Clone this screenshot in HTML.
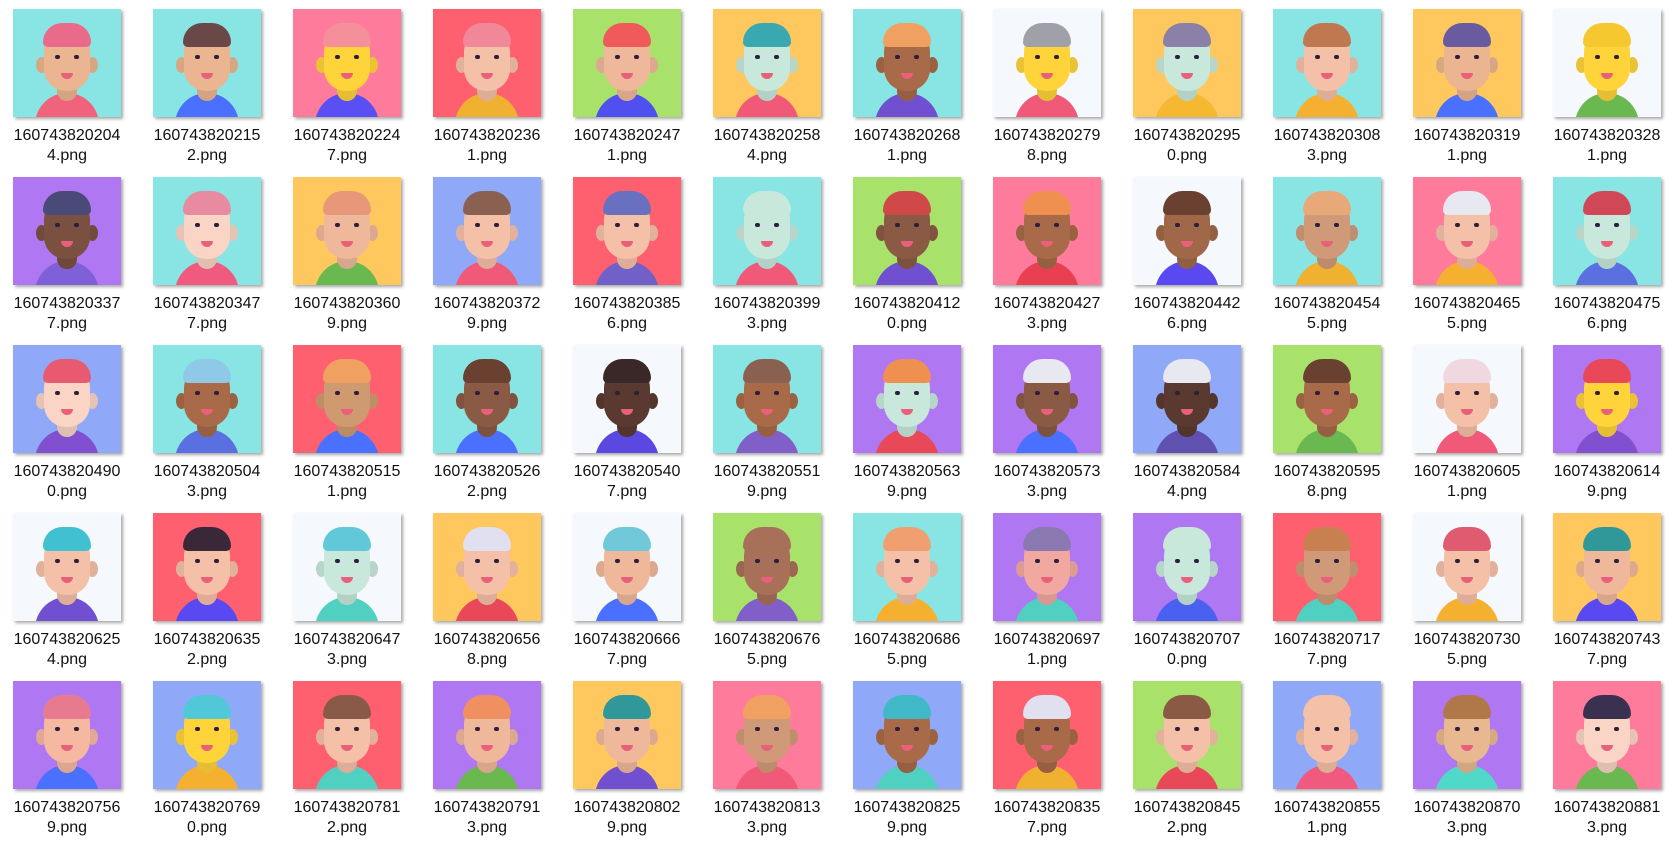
<!DOCTYPE html>
<html><head><meta charset="utf-8"><style>
html,body{margin:0;padding:0;background:#fff;width:1674px;height:847px;overflow:hidden;position:relative}
.c{position:absolute;width:108px;height:108px;overflow:hidden;background:var(--b);box-shadow:2px 2px 3px rgba(0,0,0,.35)}
.c i{position:absolute;display:block}
.t{left:22px;top:84px;width:64px;height:40px;background:var(--t);border-radius:32px 32px 0 0}
.n{left:44px;top:66px;width:20px;height:26px;background:var(--s);border-radius:0 0 10px 10px;filter:brightness(.9)}
.e1,.e2{top:48px;width:11px;height:16px;background:var(--s);border-radius:50%;filter:brightness(.92)}
.e1{left:23px}.e2{left:74px}
.f{left:31px;top:20px;width:46px;height:62px;background:var(--s);border-radius:23px 23px 22px 22px}
.h{left:30px;top:14px;width:48px;height:24px;background:var(--h);border-radius:24px 24px 6px 6px}
.y1,.y2{top:46px;width:5px;height:4px;background:#2a1f3d;border-radius:2px}
.y1{left:42px}.y2{left:61px}
.m{left:48px;top:64px;width:12px;height:6px;background:#e8607a;border-radius:0 0 6px 6px}
.l{position:absolute;width:140px;text-align:center;font:16px/20px "Liberation Sans","Noto Sans CJK SC",sans-serif;color:#111}
</style></head><body>
<!-- row 1 -->
<div class="c" style="left:13px;top:9px;--b:#88e5e3;--s:#eab590;--h:#e96a8a;--t:#f1637d"><i class="t"></i><i class="n"></i><i class="e1"></i><i class="e2"></i><i class="f"></i><i class="h"></i><i class="y1"></i><i class="y2"></i><i class="m"></i></div>
<div class="l" style="left:-3px;top:126px">160743820204<br>4.png</div>
<div class="c" style="left:153px;top:9px;--b:#88e5e3;--s:#eab590;--h:#6b4848;--t:#4a70ff"><i class="t"></i><i class="n"></i><i class="e1"></i><i class="e2"></i><i class="f"></i><i class="h"></i><i class="y1"></i><i class="y2"></i><i class="m"></i></div>
<div class="l" style="left:137px;top:126px">160743820215<br>2.png</div>
<div class="c" style="left:293px;top:9px;--b:#ff7b9c;--s:#ffd33a;--h:#f5909a;--t:#5a4ff5"><i class="t"></i><i class="n"></i><i class="e1"></i><i class="e2"></i><i class="f"></i><i class="h"></i><i class="y1"></i><i class="y2"></i><i class="m"></i></div>
<div class="l" style="left:277px;top:126px">160743820224<br>7.png</div>
<div class="c" style="left:433px;top:9px;--b:#ff6070;--s:#f5c0a8;--h:#f0889a;--t:#f0b030"><i class="t"></i><i class="n"></i><i class="e1"></i><i class="e2"></i><i class="f"></i><i class="h"></i><i class="y1"></i><i class="y2"></i><i class="m"></i></div>
<div class="l" style="left:417px;top:126px">160743820236<br>1.png</div>
<div class="c" style="left:573px;top:9px;--b:#a8e26b;--s:#f0b89a;--h:#f05a5a;--t:#5050f0"><i class="t"></i><i class="n"></i><i class="e1"></i><i class="e2"></i><i class="f"></i><i class="h"></i><i class="y1"></i><i class="y2"></i><i class="m"></i></div>
<div class="l" style="left:557px;top:126px">160743820247<br>1.png</div>
<div class="c" style="left:713px;top:9px;--b:#ffc85e;--s:#c8e8dc;--h:#3aa8b0;--t:#f05a78"><i class="t"></i><i class="n"></i><i class="e1"></i><i class="e2"></i><i class="f"></i><i class="h"></i><i class="y1"></i><i class="y2"></i><i class="m"></i></div>
<div class="l" style="left:697px;top:126px">160743820258<br>4.png</div>
<div class="c" style="left:853px;top:9px;--b:#88e5e3;--s:#a86a48;--h:#f0a060;--t:#7050d0"><i class="t"></i><i class="n"></i><i class="e1"></i><i class="e2"></i><i class="f"></i><i class="h"></i><i class="y1"></i><i class="y2"></i><i class="m"></i></div>
<div class="l" style="left:837px;top:126px">160743820268<br>1.png</div>
<div class="c" style="left:993px;top:9px;--b:#f5f8fc;--s:#ffd33a;--h:#a0a0a8;--t:#f05a78"><i class="t"></i><i class="n"></i><i class="e1"></i><i class="e2"></i><i class="f"></i><i class="h"></i><i class="y1"></i><i class="y2"></i><i class="m"></i></div>
<div class="l" style="left:977px;top:126px">160743820279<br>8.png</div>
<div class="c" style="left:1133px;top:9px;--b:#ffc85e;--s:#c8e8dc;--h:#8a80a8;--t:#f5b830"><i class="t"></i><i class="n"></i><i class="e1"></i><i class="e2"></i><i class="f"></i><i class="h"></i><i class="y1"></i><i class="y2"></i><i class="m"></i></div>
<div class="l" style="left:1117px;top:126px">160743820295<br>0.png</div>
<div class="c" style="left:1273px;top:9px;--b:#88e5e3;--s:#f5c0a8;--h:#c07850;--t:#f5b030"><i class="t"></i><i class="n"></i><i class="e1"></i><i class="e2"></i><i class="f"></i><i class="h"></i><i class="y1"></i><i class="y2"></i><i class="m"></i></div>
<div class="l" style="left:1257px;top:126px">160743820308<br>3.png</div>
<div class="c" style="left:1413px;top:9px;--b:#ffc85e;--s:#eab590;--h:#6a5aa0;--t:#4a70ff"><i class="t"></i><i class="n"></i><i class="e1"></i><i class="e2"></i><i class="f"></i><i class="h"></i><i class="y1"></i><i class="y2"></i><i class="m"></i></div>
<div class="l" style="left:1397px;top:126px">160743820319<br>1.png</div>
<div class="c" style="left:1553px;top:9px;--b:#f5f8fc;--s:#ffd33a;--h:#f5c830;--t:#6ab850"><i class="t"></i><i class="n"></i><i class="e1"></i><i class="e2"></i><i class="f"></i><i class="h"></i><i class="y1"></i><i class="y2"></i><i class="m"></i></div>
<div class="l" style="left:1537px;top:126px">160743820328<br>1.png</div>
<!-- row 2 -->
<div class="c" style="left:13px;top:177px;--b:#b077f2;--s:#7a5040;--h:#4a4a78;--t:#8060d8"><i class="t"></i><i class="n"></i><i class="e1"></i><i class="e2"></i><i class="f"></i><i class="h"></i><i class="y1"></i><i class="y2"></i><i class="m"></i></div>
<div class="l" style="left:-3px;top:294px">160743820337<br>7.png</div>
<div class="c" style="left:153px;top:177px;--b:#88e5e3;--s:#fad4c4;--h:#e88aa0;--t:#f05a7e"><i class="t"></i><i class="n"></i><i class="e1"></i><i class="e2"></i><i class="f"></i><i class="h"></i><i class="y1"></i><i class="y2"></i><i class="m"></i></div>
<div class="l" style="left:137px;top:294px">160743820347<br>7.png</div>
<div class="c" style="left:293px;top:177px;--b:#ffc85e;--s:#f0b89a;--h:#e89878;--t:#6ab850"><i class="t"></i><i class="n"></i><i class="e1"></i><i class="e2"></i><i class="f"></i><i class="h"></i><i class="y1"></i><i class="y2"></i><i class="m"></i></div>
<div class="l" style="left:277px;top:294px">160743820360<br>9.png</div>
<div class="c" style="left:433px;top:177px;--b:#8fa8f8;--s:#f5c0a8;--h:#8a6050;--t:#f05a78"><i class="t"></i><i class="n"></i><i class="e1"></i><i class="e2"></i><i class="f"></i><i class="h"></i><i class="y1"></i><i class="y2"></i><i class="m"></i></div>
<div class="l" style="left:417px;top:294px">160743820372<br>9.png</div>
<div class="c" style="left:573px;top:177px;--b:#ff6070;--s:#f5c0a8;--h:#6a70c0;--t:#7060c8"><i class="t"></i><i class="n"></i><i class="e1"></i><i class="e2"></i><i class="f"></i><i class="h"></i><i class="y1"></i><i class="y2"></i><i class="m"></i></div>
<div class="l" style="left:557px;top:294px">160743820385<br>6.png</div>
<div class="c" style="left:713px;top:177px;--b:#88e5e3;--s:#c8e8dc;--h:#c8e8dc;--t:#f05a78"><i class="t"></i><i class="n"></i><i class="e1"></i><i class="e2"></i><i class="f"></i><i class="h"></i><i class="y1"></i><i class="y2"></i><i class="m"></i></div>
<div class="l" style="left:697px;top:294px">160743820399<br>3.png</div>
<div class="c" style="left:853px;top:177px;--b:#a8e26b;--s:#8a5a44;--h:#d04848;--t:#7050d0"><i class="t"></i><i class="n"></i><i class="e1"></i><i class="e2"></i><i class="f"></i><i class="h"></i><i class="y1"></i><i class="y2"></i><i class="m"></i></div>
<div class="l" style="left:837px;top:294px">160743820412<br>0.png</div>
<div class="c" style="left:993px;top:177px;--b:#ff7b9c;--s:#a86a48;--h:#f09050;--t:#e84050"><i class="t"></i><i class="n"></i><i class="e1"></i><i class="e2"></i><i class="f"></i><i class="h"></i><i class="y1"></i><i class="y2"></i><i class="m"></i></div>
<div class="l" style="left:977px;top:294px">160743820427<br>3.png</div>
<div class="c" style="left:1133px;top:177px;--b:#f5f8fc;--s:#a06848;--h:#6a4030;--t:#5a48f0"><i class="t"></i><i class="n"></i><i class="e1"></i><i class="e2"></i><i class="f"></i><i class="h"></i><i class="y1"></i><i class="y2"></i><i class="m"></i></div>
<div class="l" style="left:1117px;top:294px">160743820442<br>6.png</div>
<div class="c" style="left:1273px;top:177px;--b:#88e5e3;--s:#d09a78;--h:#e8a878;--t:#f0b030"><i class="t"></i><i class="n"></i><i class="e1"></i><i class="e2"></i><i class="f"></i><i class="h"></i><i class="y1"></i><i class="y2"></i><i class="m"></i></div>
<div class="l" style="left:1257px;top:294px">160743820454<br>5.png</div>
<div class="c" style="left:1413px;top:177px;--b:#ff7b9c;--s:#f5c0a8;--h:#e8e8f0;--t:#f5b030"><i class="t"></i><i class="n"></i><i class="e1"></i><i class="e2"></i><i class="f"></i><i class="h"></i><i class="y1"></i><i class="y2"></i><i class="m"></i></div>
<div class="l" style="left:1397px;top:294px">160743820465<br>5.png</div>
<div class="c" style="left:1553px;top:177px;--b:#88e5e3;--s:#c8e8dc;--h:#d04858;--t:#5a70e0"><i class="t"></i><i class="n"></i><i class="e1"></i><i class="e2"></i><i class="f"></i><i class="h"></i><i class="y1"></i><i class="y2"></i><i class="m"></i></div>
<div class="l" style="left:1537px;top:294px">160743820475<br>6.png</div>
<!-- row 3 -->
<div class="c" style="left:13px;top:345px;--b:#8fa8f8;--s:#fad4c4;--h:#e85a70;--t:#8050d0"><i class="t"></i><i class="n"></i><i class="e1"></i><i class="e2"></i><i class="f"></i><i class="h"></i><i class="y1"></i><i class="y2"></i><i class="m"></i></div>
<div class="l" style="left:-3px;top:462px">160743820490<br>0.png</div>
<div class="c" style="left:153px;top:345px;--b:#88e5e3;--s:#a86a48;--h:#90c8e8;--t:#5a70e0"><i class="t"></i><i class="n"></i><i class="e1"></i><i class="e2"></i><i class="f"></i><i class="h"></i><i class="y1"></i><i class="y2"></i><i class="m"></i></div>
<div class="l" style="left:137px;top:462px">160743820504<br>3.png</div>
<div class="c" style="left:293px;top:345px;--b:#ff6070;--s:#d09a70;--h:#f0a060;--t:#4a70ff"><i class="t"></i><i class="n"></i><i class="e1"></i><i class="e2"></i><i class="f"></i><i class="h"></i><i class="y1"></i><i class="y2"></i><i class="m"></i></div>
<div class="l" style="left:277px;top:462px">160743820515<br>1.png</div>
<div class="c" style="left:433px;top:345px;--b:#88e5e3;--s:#8a5a44;--h:#6a4030;--t:#4a70ff"><i class="t"></i><i class="n"></i><i class="e1"></i><i class="e2"></i><i class="f"></i><i class="h"></i><i class="y1"></i><i class="y2"></i><i class="m"></i></div>
<div class="l" style="left:417px;top:462px">160743820526<br>2.png</div>
<div class="c" style="left:573px;top:345px;--b:#f5f8fc;--s:#5a3a30;--h:#3a2828;--t:#5a48e0"><i class="t"></i><i class="n"></i><i class="e1"></i><i class="e2"></i><i class="f"></i><i class="h"></i><i class="y1"></i><i class="y2"></i><i class="m"></i></div>
<div class="l" style="left:557px;top:462px">160743820540<br>7.png</div>
<div class="c" style="left:713px;top:345px;--b:#88e5e3;--s:#a86a48;--h:#8a6050;--t:#8060c8"><i class="t"></i><i class="n"></i><i class="e1"></i><i class="e2"></i><i class="f"></i><i class="h"></i><i class="y1"></i><i class="y2"></i><i class="m"></i></div>
<div class="l" style="left:697px;top:462px">160743820551<br>9.png</div>
<div class="c" style="left:853px;top:345px;--b:#b077f2;--s:#c8e8dc;--h:#f09050;--t:#e84858"><i class="t"></i><i class="n"></i><i class="e1"></i><i class="e2"></i><i class="f"></i><i class="h"></i><i class="y1"></i><i class="y2"></i><i class="m"></i></div>
<div class="l" style="left:837px;top:462px">160743820563<br>9.png</div>
<div class="c" style="left:993px;top:345px;--b:#b077f2;--s:#8a5a44;--h:#e8e8f0;--t:#4a70ff"><i class="t"></i><i class="n"></i><i class="e1"></i><i class="e2"></i><i class="f"></i><i class="h"></i><i class="y1"></i><i class="y2"></i><i class="m"></i></div>
<div class="l" style="left:977px;top:462px">160743820573<br>3.png</div>
<div class="c" style="left:1133px;top:345px;--b:#8fa8f8;--s:#5a3a30;--h:#e8e8f0;--t:#6050b0"><i class="t"></i><i class="n"></i><i class="e1"></i><i class="e2"></i><i class="f"></i><i class="h"></i><i class="y1"></i><i class="y2"></i><i class="m"></i></div>
<div class="l" style="left:1117px;top:462px">160743820584<br>4.png</div>
<div class="c" style="left:1273px;top:345px;--b:#a8e26b;--s:#a86a48;--h:#6a4030;--t:#6ab850"><i class="t"></i><i class="n"></i><i class="e1"></i><i class="e2"></i><i class="f"></i><i class="h"></i><i class="y1"></i><i class="y2"></i><i class="m"></i></div>
<div class="l" style="left:1257px;top:462px">160743820595<br>8.png</div>
<div class="c" style="left:1413px;top:345px;--b:#f5f8fc;--s:#f5c0a8;--h:#f0d8e0;--t:#f05a78"><i class="t"></i><i class="n"></i><i class="e1"></i><i class="e2"></i><i class="f"></i><i class="h"></i><i class="y1"></i><i class="y2"></i><i class="m"></i></div>
<div class="l" style="left:1397px;top:462px">160743820605<br>1.png</div>
<div class="c" style="left:1553px;top:345px;--b:#b077f2;--s:#ffd33a;--h:#e84858;--t:#8050d0"><i class="t"></i><i class="n"></i><i class="e1"></i><i class="e2"></i><i class="f"></i><i class="h"></i><i class="y1"></i><i class="y2"></i><i class="m"></i></div>
<div class="l" style="left:1537px;top:462px">160743820614<br>9.png</div>
<!-- row 4 -->
<div class="c" style="left:13px;top:513px;--b:#f5f8fc;--s:#f5c0a8;--h:#40c0d0;--t:#7050d0"><i class="t"></i><i class="n"></i><i class="e1"></i><i class="e2"></i><i class="f"></i><i class="h"></i><i class="y1"></i><i class="y2"></i><i class="m"></i></div>
<div class="l" style="left:-3px;top:630px">160743820625<br>4.png</div>
<div class="c" style="left:153px;top:513px;--b:#ff6070;--s:#f5c0a8;--h:#3a2838;--t:#5a48f0"><i class="t"></i><i class="n"></i><i class="e1"></i><i class="e2"></i><i class="f"></i><i class="h"></i><i class="y1"></i><i class="y2"></i><i class="m"></i></div>
<div class="l" style="left:137px;top:630px">160743820635<br>2.png</div>
<div class="c" style="left:293px;top:513px;--b:#f5f8fc;--s:#c8e8dc;--h:#60c8d8;--t:#50d0c0"><i class="t"></i><i class="n"></i><i class="e1"></i><i class="e2"></i><i class="f"></i><i class="h"></i><i class="y1"></i><i class="y2"></i><i class="m"></i></div>
<div class="l" style="left:277px;top:630px">160743820647<br>3.png</div>
<div class="c" style="left:433px;top:513px;--b:#ffc85e;--s:#f5c0a8;--h:#e0e0f0;--t:#e84858"><i class="t"></i><i class="n"></i><i class="e1"></i><i class="e2"></i><i class="f"></i><i class="h"></i><i class="y1"></i><i class="y2"></i><i class="m"></i></div>
<div class="l" style="left:417px;top:630px">160743820656<br>8.png</div>
<div class="c" style="left:573px;top:513px;--b:#f5f8fc;--s:#f0b89a;--h:#70c8d8;--t:#4a70ff"><i class="t"></i><i class="n"></i><i class="e1"></i><i class="e2"></i><i class="f"></i><i class="h"></i><i class="y1"></i><i class="y2"></i><i class="m"></i></div>
<div class="l" style="left:557px;top:630px">160743820666<br>7.png</div>
<div class="c" style="left:713px;top:513px;--b:#a8e26b;--s:#a87058;--h:#a87058;--t:#8060c8"><i class="t"></i><i class="n"></i><i class="e1"></i><i class="e2"></i><i class="f"></i><i class="h"></i><i class="y1"></i><i class="y2"></i><i class="m"></i></div>
<div class="l" style="left:697px;top:630px">160743820676<br>5.png</div>
<div class="c" style="left:853px;top:513px;--b:#88e5e3;--s:#f5c0a8;--h:#f0a070;--t:#f5b030"><i class="t"></i><i class="n"></i><i class="e1"></i><i class="e2"></i><i class="f"></i><i class="h"></i><i class="y1"></i><i class="y2"></i><i class="m"></i></div>
<div class="l" style="left:837px;top:630px">160743820686<br>5.png</div>
<div class="c" style="left:993px;top:513px;--b:#b077f2;--s:#f0a8a0;--h:#8a78b0;--t:#50d0c0"><i class="t"></i><i class="n"></i><i class="e1"></i><i class="e2"></i><i class="f"></i><i class="h"></i><i class="y1"></i><i class="y2"></i><i class="m"></i></div>
<div class="l" style="left:977px;top:630px">160743820697<br>1.png</div>
<div class="c" style="left:1133px;top:513px;--b:#b077f2;--s:#c8e8dc;--h:#c8e8dc;--t:#4a60f0"><i class="t"></i><i class="n"></i><i class="e1"></i><i class="e2"></i><i class="f"></i><i class="h"></i><i class="y1"></i><i class="y2"></i><i class="m"></i></div>
<div class="l" style="left:1117px;top:630px">160743820707<br>0.png</div>
<div class="c" style="left:1273px;top:513px;--b:#ff6070;--s:#d09a78;--h:#c88050;--t:#50d0c0"><i class="t"></i><i class="n"></i><i class="e1"></i><i class="e2"></i><i class="f"></i><i class="h"></i><i class="y1"></i><i class="y2"></i><i class="m"></i></div>
<div class="l" style="left:1257px;top:630px">160743820717<br>7.png</div>
<div class="c" style="left:1413px;top:513px;--b:#f5f8fc;--s:#f5c0a8;--h:#e05a70;--t:#f5b030"><i class="t"></i><i class="n"></i><i class="e1"></i><i class="e2"></i><i class="f"></i><i class="h"></i><i class="y1"></i><i class="y2"></i><i class="m"></i></div>
<div class="l" style="left:1397px;top:630px">160743820730<br>5.png</div>
<div class="c" style="left:1553px;top:513px;--b:#ffc85e;--s:#f0b89a;--h:#309898;--t:#5a48f0"><i class="t"></i><i class="n"></i><i class="e1"></i><i class="e2"></i><i class="f"></i><i class="h"></i><i class="y1"></i><i class="y2"></i><i class="m"></i></div>
<div class="l" style="left:1537px;top:630px">160743820743<br>7.png</div>
<!-- row 5 -->
<div class="c" style="left:13px;top:681px;--b:#b077f2;--s:#f5b8a0;--h:#e87a90;--t:#4a70ff"><i class="t"></i><i class="n"></i><i class="e1"></i><i class="e2"></i><i class="f"></i><i class="h"></i><i class="y1"></i><i class="y2"></i><i class="m"></i></div>
<div class="l" style="left:-3px;top:798px">160743820756<br>9.png</div>
<div class="c" style="left:153px;top:681px;--b:#8fa8f8;--s:#ffd33a;--h:#50c8d8;--t:#f5b030"><i class="t"></i><i class="n"></i><i class="e1"></i><i class="e2"></i><i class="f"></i><i class="h"></i><i class="y1"></i><i class="y2"></i><i class="m"></i></div>
<div class="l" style="left:137px;top:798px">160743820769<br>0.png</div>
<div class="c" style="left:293px;top:681px;--b:#ff6070;--s:#f5c0a8;--h:#8a5a48;--t:#50d0c0"><i class="t"></i><i class="n"></i><i class="e1"></i><i class="e2"></i><i class="f"></i><i class="h"></i><i class="y1"></i><i class="y2"></i><i class="m"></i></div>
<div class="l" style="left:277px;top:798px">160743820781<br>2.png</div>
<div class="c" style="left:433px;top:681px;--b:#b077f2;--s:#f0b89a;--h:#f09060;--t:#6ab850"><i class="t"></i><i class="n"></i><i class="e1"></i><i class="e2"></i><i class="f"></i><i class="h"></i><i class="y1"></i><i class="y2"></i><i class="m"></i></div>
<div class="l" style="left:417px;top:798px">160743820791<br>3.png</div>
<div class="c" style="left:573px;top:681px;--b:#ffc85e;--s:#f0b89a;--h:#309898;--t:#7050d0"><i class="t"></i><i class="n"></i><i class="e1"></i><i class="e2"></i><i class="f"></i><i class="h"></i><i class="y1"></i><i class="y2"></i><i class="m"></i></div>
<div class="l" style="left:557px;top:798px">160743820802<br>9.png</div>
<div class="c" style="left:713px;top:681px;--b:#ff7b9c;--s:#d09a78;--h:#f0a060;--t:#f05a78"><i class="t"></i><i class="n"></i><i class="e1"></i><i class="e2"></i><i class="f"></i><i class="h"></i><i class="y1"></i><i class="y2"></i><i class="m"></i></div>
<div class="l" style="left:697px;top:798px">160743820813<br>3.png</div>
<div class="c" style="left:853px;top:681px;--b:#8fa8f8;--s:#a86a48;--h:#40b8c8;--t:#50d0c0"><i class="t"></i><i class="n"></i><i class="e1"></i><i class="e2"></i><i class="f"></i><i class="h"></i><i class="y1"></i><i class="y2"></i><i class="m"></i></div>
<div class="l" style="left:837px;top:798px">160743820825<br>9.png</div>
<div class="c" style="left:993px;top:681px;--b:#ff6070;--s:#a86a48;--h:#e0e0f0;--t:#f0b030"><i class="t"></i><i class="n"></i><i class="e1"></i><i class="e2"></i><i class="f"></i><i class="h"></i><i class="y1"></i><i class="y2"></i><i class="m"></i></div>
<div class="l" style="left:977px;top:798px">160743820835<br>7.png</div>
<div class="c" style="left:1133px;top:681px;--b:#a8e26b;--s:#f5c0a8;--h:#8a5a44;--t:#e84858"><i class="t"></i><i class="n"></i><i class="e1"></i><i class="e2"></i><i class="f"></i><i class="h"></i><i class="y1"></i><i class="y2"></i><i class="m"></i></div>
<div class="l" style="left:1117px;top:798px">160743820845<br>2.png</div>
<div class="c" style="left:1273px;top:681px;--b:#8fa8f8;--s:#f5c0a8;--h:#f5c0a8;--t:#f05a7e"><i class="t"></i><i class="n"></i><i class="e1"></i><i class="e2"></i><i class="f"></i><i class="h"></i><i class="y1"></i><i class="y2"></i><i class="m"></i></div>
<div class="l" style="left:1257px;top:798px">160743820855<br>1.png</div>
<div class="c" style="left:1413px;top:681px;--b:#b077f2;--s:#e8b890;--h:#b07848;--t:#50d8c8"><i class="t"></i><i class="n"></i><i class="e1"></i><i class="e2"></i><i class="f"></i><i class="h"></i><i class="y1"></i><i class="y2"></i><i class="m"></i></div>
<div class="l" style="left:1397px;top:798px">160743820870<br>3.png</div>
<div class="c" style="left:1553px;top:681px;--b:#ff7b9c;--s:#fad4c4;--h:#3a3050;--t:#6ab850"><i class="t"></i><i class="n"></i><i class="e1"></i><i class="e2"></i><i class="f"></i><i class="h"></i><i class="y1"></i><i class="y2"></i><i class="m"></i></div>
<div class="l" style="left:1537px;top:798px">160743820881<br>3.png</div>
</body></html>
